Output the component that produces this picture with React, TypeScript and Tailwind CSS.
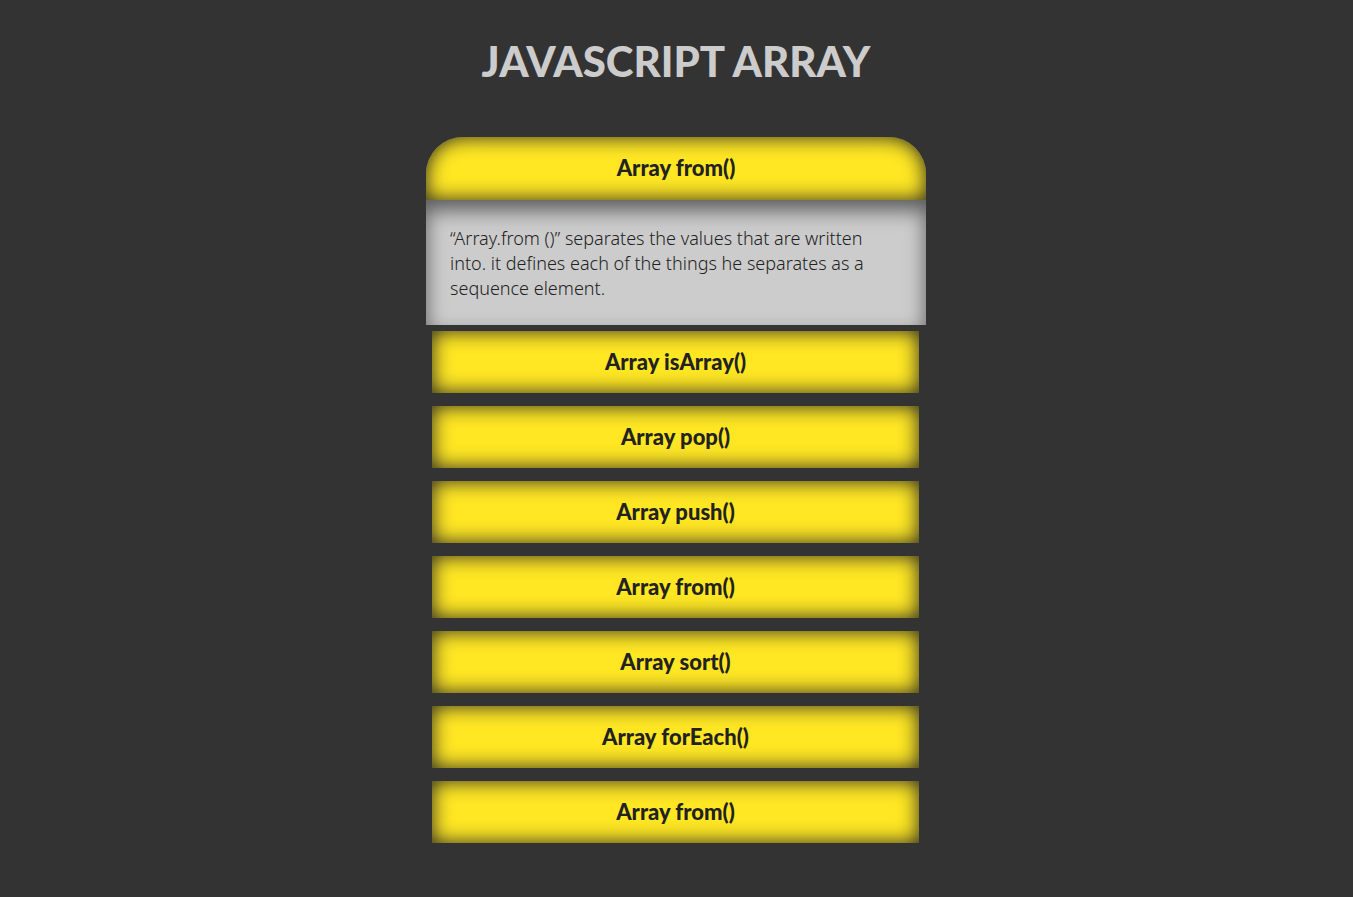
import { useState } from "react";

type Method = { name: string; text: string };

const methods: Method[] = [
  {
    name: "Array from()",
    text: "“Array.from ()” separates the values that are written into. it defines each of the things he separates as a sequence element.",
  },
  { name: "Array isArray()", text: "Checks whether the given value is an array." },
  { name: "Array pop()", text: "Removes the last element of the array." },
  { name: "Array push()", text: "Adds a new element to the end of the array." },
  { name: "Array from()", text: "Creates an array from the given values." },
  { name: "Array sort()", text: "Sorts the elements of the array." },
  { name: "Array forEach()", text: "Runs a function for each element of the array." },
  { name: "Array from()", text: "Creates an array from the given values." },
];

const headingFont = "font-['Lato',sans-serif] font-black";

function Item({ method, open, onToggle, id }: { method: Method; open: boolean; onToggle: () => void; id: string }) {
  return (
    <li className={open ? "" : "pt-1.5 pr-[7px] pb-[7px] pl-1.5"}>
      <button
        type="button"
        aria-expanded={open}
        aria-controls={id}
        onClick={onToggle}
        className={`${headingFont} block w-full cursor-pointer bg-[#ffe724] pb-0.5 text-center text-[22px] text-[#222] shadow-[inset_0_0_20px_#222] ${
          open ? "h-[63px] rounded-t-[37px]" : "h-[62px]"
        }`}
      >
        {method.name}
      </button>
      {open && (
        <p
          id={id}
          className="bg-[#ccc] pt-[26px] pr-8 pb-6 pl-6 font-['Noto_Sans',sans-serif] text-[18px] leading-[25px] font-light text-[#222] shadow-[inset_0_10px_20px_#5a5a5a]"
        >
          {method.text}
        </p>
      )}
    </li>
  );
}

export default function App() {
  const [active, setActive] = useState<number | null>(0);
  return (
    <main className="flex min-h-screen flex-col items-center bg-[#333] pt-[31px] pr-[17px] pb-12 pl-4">
      <h1 className={`${headingFont} text-center text-[42px] leading-[60px] text-[#ccc]`}>JAVASCRIPT ARRAY</h1>
      <ul className="mt-[46px] w-full max-w-[500px]">
        {methods.map((method, i) => (
          <Item
            key={i}
            id={`method-${i}`}
            method={method}
            open={active === i}
            onToggle={() => setActive(active === i ? null : i)}
          />
        ))}
      </ul>
    </main>
  );
}
